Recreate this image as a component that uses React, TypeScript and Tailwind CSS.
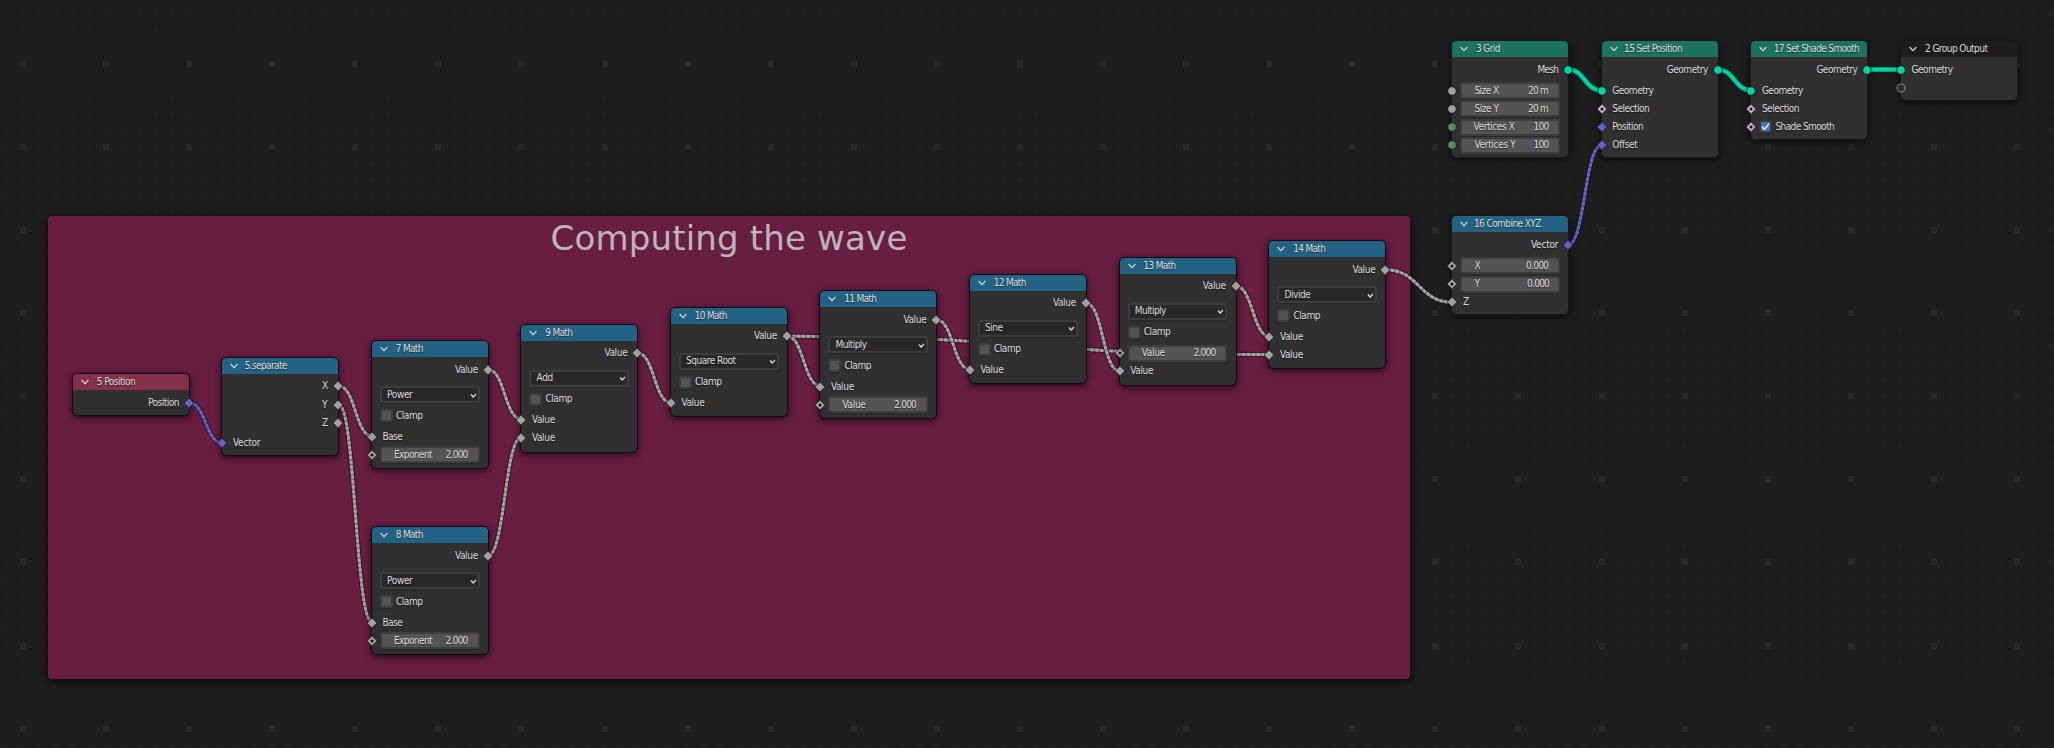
import { useLayoutEffect, useRef, useState } from 'react';

type Kind = 'value' | 'vector' | 'geo' | 'bool' | 'int' | 'virtual';
type Socket = { shape: 'dot' | 'diamond' | 'hollow' | 'ring'; kind: Kind };
type Row =
  | { t: 'out'; label: string; w: number; s: Socket }
  | { t: 'in'; label: string; w: number; s: Socket }
  | { t: 'field'; label: string; w: number; value: string; vw: number; s: Socket; inset?: number; pad?: number }
  | { t: 'select'; label: string; w: number }
  | { t: 'check'; label: string; w: number; on?: boolean; s?: Socket }
  | { t: 'gap'; h: number };
type Node = { x: number; y: number; h: number; title: string; tw: number; tx: number; head: string; framed?: boolean; rows: Row[] };

const COLORS: Record<Kind, string> = {
  value: '#a1a1a1',
  vector: '#6363c7',
  geo: '#00d6a3',
  bool: '#cca6d6',
  int: '#598c5c',
  virtual: '#2f2f2f',
};

/** Single-line text whose tracking is adjusted so that it spans `w` pixels. */
function Fit({ text, w, className = '' }: { text: string; w: number; className?: string }) {
  const ref = useRef<HTMLSpanElement>(null);
  const [ls, setLs] = useState(0);
  useLayoutEffect(() => {
    const el = ref.current;
    if (!el) return;
    el.style.letterSpacing = '0px';
    const natural = el.getBoundingClientRect().width;
    const next = (w - natural) / text.length;
    el.style.letterSpacing = `${next}px`;
    setLs(next);
  }, [text, w]);
  return (
    <span ref={ref} className={`inline-block whitespace-pre ${className}`} style={{ letterSpacing: `${ls}px` }}>
      {text}
    </span>
  );
}

function SocketMark({ s, side }: { s: Socket; side: 'left' | 'right' }) {
  const c = COLORS[s.kind];
  return (
    <svg
      viewBox="-6 -6 12 12"
      className={`absolute top-1/2 size-3 -translate-y-1/2 ${side === 'left' ? '-left-1.5' : '-right-1.5'}`}
    >
      {s.shape === 'dot' && <circle r="4.3" fill={c} stroke="#151515" strokeWidth="0.9" />}
      {s.shape === 'ring' && <circle r="4" fill="#2d2d2d" stroke="#808080" strokeWidth="1.1" />}
      {(s.shape === 'diamond' || s.shape === 'hollow') && (
        <path d="M0-4.9 4.9 0 0 4.9-4.9 0Z" fill={c} stroke="#151515" strokeWidth="0.7" />
      )}
      {s.shape === 'hollow' && <circle r="1.5" fill="#151515" />}
    </svg>
  );
}

function RowView({ r }: { r: Row }) {
  switch (r.t) {
    case 'gap':
      return <div className="shrink-0" style={{ height: r.h }} />;
    case 'out':
      return (
        <div className="relative flex h-[18.2px] shrink-0 items-center justify-end pr-[10px]">
          <Fit text={r.label} w={r.w} />
          <SocketMark s={r.s} side="right" />
        </div>
      );
    case 'in':
      return (
        <div className="relative flex h-[18.2px] shrink-0 items-center pl-[10.7px]">
          <Fit text={r.label} w={r.w} />
          <SocketMark s={r.s} side="left" />
        </div>
      );
    case 'field':
      return (
        <div className="relative flex h-[18.2px] shrink-0 items-center px-[8.3px]">
          <div
            className="flex h-[17px] w-full items-center justify-between rounded-[3px] border-2 border-[#3d3d3d] bg-[#545454] shadow-[0_1px_1px_#0003]"
            style={{ paddingLeft: r.inset ?? 12, paddingRight: r.pad ?? 10 }}
          >
            <Fit text={r.label} w={r.w} />
            <Fit text={r.value} w={r.vw} />
          </div>
          <SocketMark s={r.s} side="left" />
        </div>
      );
    case 'select':
      return (
        <div className="flex h-[17px] shrink-0 items-center px-[8.3px]">
          <div className="flex h-[17px] w-full items-center justify-between rounded-[3px] border-2 border-[#3d3d3d] bg-[#282828] pr-[1px] pl-[5px] shadow-[0_1px_1px_#0003]">
            <Fit text={r.label} w={r.w} />
            <svg viewBox="0 0 7 6" className="mt-[2px] h-[6px] w-[7px]">
              <path d="M1 1.5 3.2 4 6 1" fill="none" stroke="#e0e0e0" strokeWidth="1.2" />
            </svg>
          </div>
        </div>
      );
    case 'check':
      return (
        <div className="relative flex h-[18px] shrink-0 items-center pl-[8.3px]">
          <div
            className={`mr-[3px] flex size-[13px] items-center justify-center rounded-[3px] border-2 border-[#3d3d3d] shadow-[0_1px_1px_#0003] ${r.on ? 'bg-[#4772b3]' : 'bg-[#545454]'}`}
          >
            {r.on && (
              <svg viewBox="0 0 9 9" className="size-[9px]">
                <path d="M1 4.8 3.5 7.3 8 1.6" fill="none" stroke="#fff" strokeWidth="1.4" />
              </svg>
            )}
          </div>
          <Fit text={r.label} w={r.w} />
          {r.s && <SocketMark s={r.s} side="left" />}
        </div>
      );
  }
}

function NodeView({ n }: { n: Node }) {
  return (
    <section
      className={`absolute flex w-[116.2px] flex-col rounded-[4px] bg-[#303030] shadow-[0_2px_7px_1px_#000a] ${n.framed ? 'outline-1 outline-[#120a0e]' : 'outline-1 outline-[#191919]'}`}
      style={{ left: n.x - 0.8, top: n.y, height: n.h }}
    >
      <header className={`flex h-[16px] shrink-0 items-center rounded-t-[3px] pl-[8px] ${n.head}`}>
        <svg viewBox="0 0 8 6" className="h-[6px] w-[8px] shrink-0">
          <path d="M0.6 1 4 4.7 7.4 1" fill="none" stroke="#d8d8d8" strokeWidth="1.15" />
        </svg>
        <div style={{ marginLeft: n.tx - 16 }} className="flex">
          <Fit text={n.title} w={n.tw} />
        </div>
      </header>
      <div className="flex flex-col pt-[3.7px]">
        {n.rows.map((r, i) => (
          <RowView key={i} r={r} />
        ))}
      </div>
    </section>
  );
}

const diamond = (kind: Kind): Socket => ({ shape: 'diamond', kind });
const hollow = (kind: Kind): Socket => ({ shape: 'hollow', kind });
const dot = (kind: Kind): Socket => ({ shape: 'dot', kind });
const gap = (h: number): Row => ({ t: 'gap', h });
const valueOut: Row = { t: 'out', label: 'Value', w: 23, s: diamond('value') };
const valueIn: Row = { t: 'in', label: 'Value', w: 23, s: diamond('value') };
const baseIn: Row = { t: 'in', label: 'Base', w: 20, s: diamond('value') };
const exponent: Row = { t: 'field', label: 'Exponent', w: 38, value: '2.000', vw: 22, s: hollow('value') };
const valueField: Row = { t: 'field', label: 'Value', w: 23, value: '2.000', vw: 22, s: hollow('value') };

const BLUE = 'bg-[#246283]';
const GREEN = 'bg-[#1d725e]';

function math(x: number, y: number, title: string, tw: number, op: string, ow: number, inputs: Row[]): Node {
  return {
    x,
    y,
    title,
    tw,
    tx: 24,
    head: BLUE,
    framed: true,
    h: inputs.length === 1 ? 108.5 : 127,
    rows: [valueOut, gap(7.3), { t: 'select', label: op, w: ow }, gap(3.4), { t: 'check', label: 'Clamp', w: 26.5 }, gap(2.9), ...inputs],
  };
}

const NODES: Node[] = [
  {
    x: 73.5, y: 374, h: 41, title: '5 Position', tw: 38.5, tx: 24, head: 'bg-[#83314a]', framed: true,
    rows: [{ t: 'out', label: 'Position', w: 31, s: diamond('vector') }],
  },
  {
    x: 223, y: 357.7, h: 97.3, title: '5.separate', tw: 42, tx: 22.5, head: BLUE, framed: true,
    rows: [
      { t: 'out', label: 'X', w: 6.5, s: diamond('value') },
      { t: 'out', label: 'Y', w: 6.5, s: diamond('value') },
      { t: 'out', label: 'Z', w: 6.5, s: diamond('value') },
      gap(2.3),
      { t: 'in', label: 'Vector', w: 27.5, s: diamond('vector') },
    ],
  },
  math(372.5, 341, '7 Math', 27, 'Power', 25.5, [baseIn, exponent]),
  math(372.5, 527, '8 Math', 27, 'Power', 25.5, [baseIn, exponent]),
  math(522, 324.5, '9 Math', 27, 'Add', 16.5, [valueIn, valueIn]),
  math(671.5, 307.6, '10 Math', 32, 'Square Root', 49.5, [valueIn]),
  math(821, 291, '11 Math', 32, 'Multiply', 31, [valueIn, valueField]),
  math(970.5, 274.7, '12 Math', 32, 'Sine', 17.5, [valueIn]),
  math(1120.3, 257.7, '13 Math', 32, 'Multiply', 31, [valueField, valueIn]),
  math(1270, 241, '14 Math', 32, 'Divide', 26, [valueIn, valueIn]),
  {
    x: 1453, y: 41, h: 116, title: '3 Grid', tw: 24, tx: 23.7, head: GREEN,
    rows: [
      { t: 'out', label: 'Mesh', w: 21, s: dot('geo') },
      gap(2.7),
      { t: 'field', label: 'Size X', w: 24, value: '20 m', vw: 20, s: dot('value') },
      { t: 'field', label: 'Size Y', w: 24, value: '20 m', vw: 20, s: dot('value') },
      { t: 'field', label: 'Vertices X', w: 41, value: '100', vw: 15, s: dot('int'), inset: 11, pad: 9.5 },
      { t: 'field', label: 'Vertices Y', w: 41, value: '100', vw: 15, s: dot('int'), pad: 9.5 },
    ],
  },
  {
    x: 1602.4, y: 41, h: 116, title: '15 Set Position', tw: 58, tx: 22.5, head: GREEN,
    rows: [
      { t: 'out', label: 'Geometry', w: 41, s: dot('geo') },
      gap(2.7),
      { t: 'in', label: 'Geometry', w: 41, s: dot('geo') },
      { t: 'in', label: 'Selection', w: 37, s: hollow('bool') },
      { t: 'in', label: 'Position', w: 31, s: diamond('vector') },
      { t: 'in', label: 'Offset', w: 25, s: diamond('vector') },
    ],
  },
  {
    x: 1752, y: 41, h: 98, title: '17 Set Shade Smooth', tw: 85.5, tx: 22.5, head: GREEN,
    rows: [
      { t: 'out', label: 'Geometry', w: 41, s: dot('geo') },
      gap(2.7),
      { t: 'in', label: 'Geometry', w: 41, s: dot('geo') },
      { t: 'in', label: 'Selection', w: 37, s: hollow('bool') },
      { t: 'check', label: 'Shade Smooth', w: 58.5, on: true, s: hollow('bool') },
    ],
  },
  {
    x: 1901.7, y: 41, h: 59, title: '2 Group Output', tw: 62.5, tx: 24, head: 'bg-[#1d1d1d]',
    rows: [
      { t: 'in', label: 'Geometry', w: 41, s: dot('geo') },
      { t: 'in', label: '', w: 0, s: { shape: 'ring', kind: 'virtual' } },
    ],
  },
  {
    x: 1453, y: 216.2, h: 98, title: '16 Combine XYZ', tw: 67, tx: 21.7, head: BLUE,
    rows: [
      { t: 'out', label: 'Vector', w: 27.5, s: diamond('vector') },
      gap(2.7),
      { t: 'field', label: 'X', w: 6.5, value: '0.000', vw: 22, s: hollow('value') },
      { t: 'field', label: 'Y', w: 6.5, value: '0.000', vw: 22, s: hollow('value'), pad: 9 },
      { t: 'in', label: 'Z', w: 6.5, s: diamond('value') },
    ],
  },
];

type Link = [number, number, number, number, 'value' | 'vector' | 'geo'];
const LINKS: Link[] = [
  [189, 402.7, 222.5, 443.3, 'vector'],
  [338.7, 386, 372, 436, 'value'],
  [338.7, 404.5, 372, 622, 'value'],
  [488, 369.5, 521.5, 419.3, 'value'],
  [488, 555.7, 521.5, 437.5, 'value'],
  [637.5, 353, 671, 402.7, 'value'],
  [787, 336.3, 1269.5, 354.5, 'value'],
  [787, 336.3, 820.5, 386, 'value'],
  [936.5, 319.7, 970, 369.5, 'value'],
  [1086, 303, 1119.5, 371, 'value'],
  [1236, 286.3, 1269.5, 336.3, 'value'],
  [1385.5, 269.7, 1452.5, 302.3, 'value'],
  [1568, 245, 1601.5, 145.2, 'vector'],
  [1568, 69.5, 1601.5, 90.3, 'geo'],
  [1717.5, 69.5, 1751.5, 90.3, 'geo'],
  [1867, 69.5, 1900.5, 69.5, 'geo'],
];

function Links() {
  return (
    <svg className="pointer-events-none absolute inset-0" width="2054" height="748" fill="none">
      {LINKS.map(([x1, y1, x2, y2, kind], i) => {
        const m = (x1 + x2) / 2;
        const d = `M${x1} ${y1}C${m} ${y1} ${m} ${y2} ${x2} ${y2}`;
        const geo = kind === 'geo';
        return (
          <g key={i}>
            <path d={d} stroke="#101010" strokeOpacity="0.55" strokeWidth={geo ? 6.8 : 5.2} />
            {geo ? (
              <>
                <path d={d} stroke="#059a76" strokeWidth="5.2" />
                <path d={d} stroke="#00d6a3" strokeWidth="3.2" />
              </>
            ) : (
              <>
                <path d={d} stroke={kind === 'vector' ? '#4a4a94' : '#777073'} strokeWidth="2.9" />
                <path d={d} stroke={kind === 'vector' ? '#6666cc' : '#a8a8a8'} strokeWidth="2.9" strokeDasharray="3.4 1.5" />
              </>
            )}
          </g>
        );
      })}
    </svg>
  );
}

const PITCH = 83.08;
const MAJOR = Array.from({ length: 25 }, (_, c) =>
  Array.from({ length: 9 }, (_, r) => [Math.round(20 + c * PITCH), Math.round(61 + r * PITCH)]),
).flat();

function Dots() {
  return (
    <svg className="pointer-events-none absolute inset-0" width="2054" height="748">
      <defs>
        <pattern id="minor" x="14.7" y="55.7" width="16.616" height="16.616" patternUnits="userSpaceOnUse">
          <rect x="6.3" y="6.3" width="4" height="4" fill="#1f1f1f" />
        </pattern>
      </defs>
      <rect width="2054" height="748" fill="url(#minor)" />
      {MAJOR.map(([x, y]) => (
        <rect key={`${x}-${y}`} x={x} y={y} width="6" height="6" fill="#282828" />
      ))}
    </svg>
  );
}

export default function App() {
  return (
    <main className="relative h-[748px] w-[2054px] overflow-hidden bg-[#1d1d1d] font-['DejaVu_Sans_Condensed','DejaVu_Sans',sans-serif] text-[10px] leading-[14px] text-[#dedede] [text-shadow:0_1px_1px_#0008]">
      <Dots />
      <section className="absolute top-[216px] left-[48px] flex h-[463px] w-[1362px] justify-center rounded-[4px] bg-[#681d42] shadow-[0_2px_7px_1px_#000a]">
        <h1 className="mt-px h-[42px] font-['DejaVu_Sans',sans-serif] text-[34px] leading-[42px] text-[#bdb5ba] [text-shadow:none]">
          <Fit text="Computing the wave" w={357} />
        </h1>
      </section>
      <Links />
      {NODES.map((n) => (
        <NodeView key={n.title} n={n} />
      ))}
    </main>
  );
}
